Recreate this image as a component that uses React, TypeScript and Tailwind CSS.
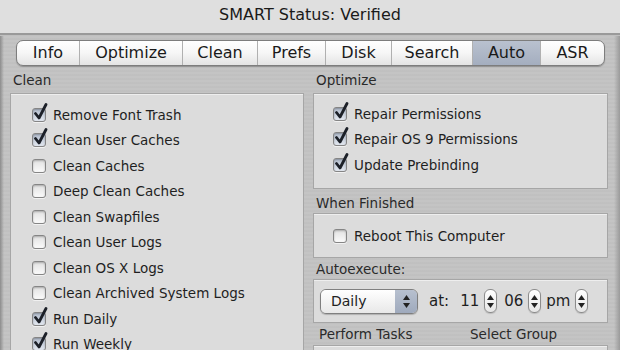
import React from 'react';

const font = { fontFamily: '"DejaVu Sans", "Lucida Grande", sans-serif' };

const Check: React.FC<{ on?: boolean }> = ({ on }) => (
  <span className="relative inline-block w-[14px] h-[14px] shrink-0">
    <span
      className={`absolute inset-0 rounded-[3px] border border-[#858585] shadow-[inset_0_1px_2px_rgba(0,0,0,0.25),0_1px_0_rgba(255,255,255,0.6)] ${
        on ? 'bg-gradient-to-b from-[#b3bdcd] to-[#e2e7ef]' : 'bg-gradient-to-b from-[#e2e2e2] to-[#fafafa]'
      }`}
    />
    {on && (
      <svg className="absolute left-[1px] top-[-5px]" width="15" height="18" viewBox="0 0 15 18">
        <path d="M2.5 10.5 L6 15 L13 1.5" fill="none" stroke="#1c2028" strokeWidth="2.8" strokeLinecap="round" strokeLinejoin="round" />
      </svg>
    )}
  </span>
);

const Row: React.FC<{ on?: boolean; label: string }> = ({ on, label }) => (
  <div className="flex items-center h-[25.5px] gap-[7px]">
    <Check on={on} />
    <span className="text-[13.5px] text-[#1f1f1f]">{label}</span>
  </div>
);

const Arrows = () => (
  <>
    <svg width="7" height="5" viewBox="0 0 7 5"><path d="M3.5 0 L7 5 L0 5Z" fill="#222" /></svg>
    <svg width="7" height="5" viewBox="0 0 7 5"><path d="M0 0 L7 0 L3.5 5Z" fill="#222" /></svg>
  </>
);

const Stepper = () => (
  <span className="inline-flex flex-col items-center justify-center gap-[3px] w-[13px] h-[24px] rounded-[6px] border border-[#8c8c8c] bg-gradient-to-b from-[#ffffff] to-[#e6e6e6] shadow-[0_1px_1px_rgba(0,0,0,0.15)]">
    <Arrows />
  </span>
);

const Label: React.FC<{ children: React.ReactNode; className?: string }> = ({ children, className }) => (
  <div className={`text-[13.5px] text-[#2a2a2a] pl-[3px] flex items-center ${className ?? ''}`}>{children}</div>
);

const Box: React.FC<{ children?: React.ReactNode; className?: string }> = ({ children, className }) => (
  <div className={`border border-[#a6a6a6] bg-[#dcdcdc] shadow-[inset_0_1px_0_rgba(255,255,255,0.5)] ${className ?? ''}`}>{children}</div>
);

const tabs = [
  { name: 'Info', w: 63 },
  { name: 'Optimize', w: 103 },
  { name: 'Clean', w: 75 },
  { name: 'Prefs', w: 68 },
  { name: 'Disk', w: 66 },
  { name: 'Search', w: 81 },
  { name: 'Auto', w: 68 },
  { name: 'ASR', w: 0 },
];

export default function App() {
  return (
    <div
      className="w-[620px] h-[350px] overflow-hidden bg-[#c2c2c2] bg-[repeating-linear-gradient(180deg,#c4c4c4_0px,#c4c4c4_2px,#bdbdbd_3px,#c3c3c3_4px)] relative"
      style={font}
    >
      <div className="h-[35px] bg-[#dfdfdf] border-b-2 border-[#9a9a9a] flex justify-center pt-[3px]">
        <span className="text-[16px] text-[#1a1a1a]">SMART Status: Verified</span>
      </div>

      <div className="ml-[16px] w-[589px] mt-[5px] h-[26px] flex rounded-[7px] border border-[#7d7d7d] bg-gradient-to-b from-[#ffffff] via-[#f6f6f6] to-[#e4e4e4] shadow-[0_1px_1px_rgba(0,0,0,0.25)] overflow-hidden">
        {tabs.map((t, i) => (
          <div
            key={t.name}
            className={`flex items-center justify-center text-[16px] text-[#1a1a1a] ${
              i < tabs.length - 1 ? 'border-r border-[#b0b0b0]' : ''
            } ${t.name === 'Auto' ? 'bg-gradient-to-b from-[#b9c1cf] to-[#a4aebf]' : ''} ${t.w === 0 ? 'flex-1' : ''}`}
            style={t.w ? { width: t.w } : undefined}
          >
            {t.name}
          </div>
        ))}
      </div>

      <div className="flex mt-[1px]">
        <div className="ml-[10px] w-[294px] flex flex-col">
          <Label className="h-[26px]">Clean</Label>
          <Box className="h-[300px] pl-[21px] pt-[8px]">
            <Row on label="Remove Font Trash" />
            <Row on label="Clean User Caches" />
            <Row label="Clean Caches" />
            <Row label="Deep Clean Caches" />
            <Row label="Clean Swapfiles" />
            <Row label="Clean User Logs" />
            <Row label="Clean OS X Logs" />
            <Row label="Clean Archived System Logs" />
            <Row on label="Run Daily" />
            <Row on label="Run Weekly" />
          </Box>
        </div>

        <div className="ml-[9px] w-[295px] flex flex-col">
          <Label className="h-[26px]">Optimize</Label>
          <Box className="h-[96px] pl-[19px] pt-[7px]">
            <Row on label="Repair Permissions" />
            <Row on label="Repair OS 9 Permissions" />
            <Row on label="Update Prebinding" />
          </Box>
          <Label className="h-[24px] pt-[4px]">When Finished</Label>
          <Box className="h-[45px] pl-[19px] pt-[9px]">
            <Row label="Reboot This Computer" />
          </Box>
          <Label className="h-[21px] pt-[2px]">Autoexecute:</Label>
          <Box className="h-[44px] flex items-center pl-[6px] gap-[5px]">
            <div className="flex h-[25px] w-[98px] rounded-[6px] border border-[#7f7f7f] overflow-hidden shadow-[0_1px_1px_rgba(0,0,0,0.2)]">
              <div className="flex-1 bg-gradient-to-b from-[#ffffff] to-[#e8e8e8] text-[14px] text-[#222] flex items-center pl-[10px]">Daily</div>
              <div className="w-[22px] bg-gradient-to-b from-[#b7c0cf] to-[#9faabd] flex flex-col items-center justify-center gap-[3px]">
                <Arrows />
              </div>
            </div>
            <span className="text-[15px] text-[#1f1f1f] ml-[6px]">at:</span>
            <span className="text-[15px] text-[#1f1f1f] ml-[6px]">11</span>
            <Stepper />
            <span className="text-[15px] text-[#1f1f1f] ml-[2px]">06</span>
            <Stepper />
            <span className="text-[15px] text-[#1f1f1f]">pm</span>
            <Stepper />
          </Box>
          <div className="h-[22px] flex items-center text-[13.5px] text-[#2a2a2a] pl-[6px]">
            <span className="w-[151px]">Perform Tasks</span>
            <span>Select Group</span>
          </div>
          <Box className="h-[40px]" />
        </div>
      </div>
      <div className="absolute top-[36px] bottom-0 left-0 w-[4px] bg-gradient-to-r from-[#8d8d8d] to-transparent" />
      <div className="absolute top-[36px] bottom-0 right-0 w-[6px] bg-gradient-to-l from-[#9a9a9a] to-transparent" />
    </div>
  );
}
